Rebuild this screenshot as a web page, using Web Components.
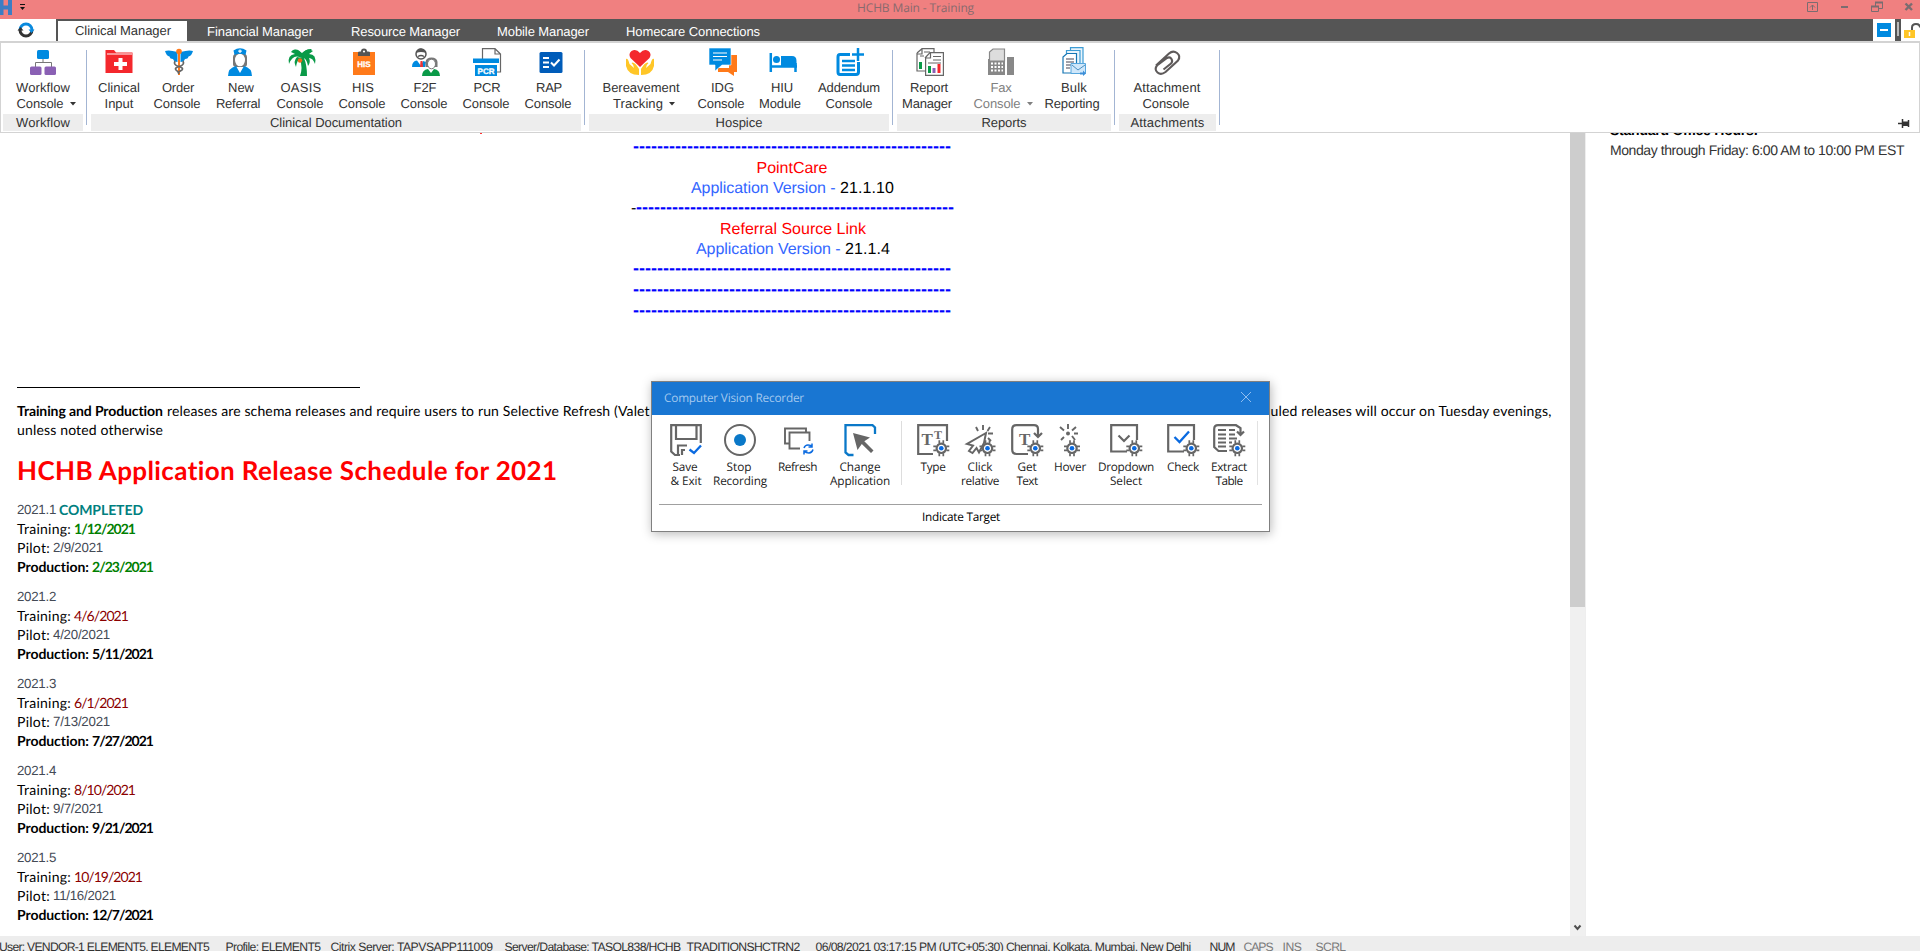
<!DOCTYPE html>
<html lang="en"><head><meta charset="utf-8"><title>HCHB Main - Training</title>
<style>
html,body{margin:0;height:100%;overflow:hidden;background:#fff}
body{font:13px "Liberation Sans",sans-serif;color:#333;text-rendering:geometricPrecision}
</style></head><body>
<app-shell></app-shell>
<script>
const define=(name,html,setup)=>customElements.define(name,class extends HTMLElement{
  connectedCallback(){
    if(this.shadowRoot)return;
    const root=this.attachShadow({mode:'open'});
    root.innerHTML=typeof html==='function'?html(this):html;
    if(setup)setup(this,root);
  }
});

// Single-line text whose tracking is adjusted to occupy a given width.
define('fit-text','<style>:host{display:inline-block;white-space:pre;text-align:left}span{display:inline-block}</style><span><slot></slot></span>',(el,root)=>{
  const w=+el.getAttribute('w'),s=root.querySelector('span');
  if(!w)return;
  el.style.width=w+'px';
  const n=el.textContent.length;
  s.style.letterSpacing=((w-s.getBoundingClientRect().width)/n).toFixed(3)+'px';
});
const ft=(t,w,cls='')=>`<fit-text w="${w}" class="${cls}">${t.replace(/&/g,'&amp;')}</fit-text>`;

/* ---------- icons ---------- */
const gear=(x,y)=>`<g transform="translate(${x} ${y})"><circle r="4.7" fill="#fff" stroke="#666" stroke-width="2.2"/><path d="M-2-5V-8M2-5V-8M-2 5V8M2 5V8M-5-2H-8M-5 2H-8M5-2H8M5 2H8" stroke="#666" stroke-width="1.7"/><circle r="2.3" fill="#0a6ae0"/></g>`;
const I={
workflow:'<rect x="8" y="2" width="12" height="9" rx="1.5" fill="#008ae0"/><path d="M14 11V15M6.500 19V14.500H22.500V19" fill="none" stroke="#777" stroke-width="1"/><rect x="1" y="18.500" width="11.500" height="8.500" rx="1.500" fill="#8a60b4"/><rect x="15.500" y="18.500" width="11.500" height="8.500" rx="1.500" fill="#8a60b4"/>',
clinical:'<path d="M.5 2H9L11 4.500H27.500V25H.5z" fill="#f4282d"/><path d="M2 6H27" stroke="#fff" stroke-width="1"/><path d="M13.500 10H17.500V14H22V18H17.500V22H13.500V18H9V14H13.500z" fill="#fff"/>',
order:'<path d="M0 3Q4 1.500 12.500 4V14Q9 14 8 11Q5 11 4.500 8.500Q1.500 8 0 3zM28 3Q24 1.500 15.500 4V14Q19 14 20 11Q23 11 23.500 8.500Q26.500 8 28 3z" fill="#008ae0"/><path d="M14 4V27" stroke="#ff7a1a" stroke-width="2"/><circle cx="14" cy="3.500" r="2.800" fill="#ff7a1a"/><path d="M10 13Q8 17 14 18.500Q19 20 17 22Q15 23 14 24M18 13Q20 17 14 18.500Q9 20 11 22Q13 23 14 26" fill="none" stroke="#666" stroke-width="1.700"/>',
referral:'<path d="M7 16V9Q7 5 14 5T21 9V16Q21 19 18 19H10Q7 19 7 16z" fill="#777"/><ellipse cx="14" cy="12" rx="5" ry="6.300" fill="#fff"/><path d="M8.500 7L7.500 2.500Q14-2 20.500 2.500L19.500 7Q14 4.500 8.500 7z" fill="#008ae0"/><path d="M14 1.500V5M12.200 3.200H15.800" stroke="#fff" stroke-width="1.200"/><path d="M2 28Q2 20 10 18L14 25 18 18Q26 20 26 28z" fill="#008ae0"/>',
oasis:'<path d="M14 10Q5 5 1 16Q-1 7 7 6L3 4Q6-1 14 5Q20-1 25 3L21 6Q29 6 27 16Q25 10 21 10Q23 14 20 18Q19 12 16 10Q19 17 19 28H12Q15 20 12 11Q9 12 8 19Q5 13 9 9z" fill="#0a9a48"/><path d="M5 2Q11 0 14 7Q17 0 24 1L15 9z" fill="#0a9a48"/><circle cx="12" cy="12.500" r="2.200" fill="#f06a18"/>',
his:'<path d="M3 4H25V27H3z" fill="#ff7a1a"/><path d="M8 8V4.500Q8 3.500 10 3.500H11Q11 .5 14 .5T17 3.500H18Q20 3.500 20 4.500V8z" fill="#555"/><circle cx="14" cy="3.500" r="1.100" fill="#fff"/><text x="14" y="19" text-anchor="middle" font-family="Liberation Sans" font-weight="bold" font-size="8" stroke="#fff" stroke-width=".3" fill="#fff">HIS</text>',
f2f:'<circle cx="9" cy="6" r="5" fill="#fff" stroke="#555" stroke-width="1.500"/><path d="M4 5Q5 0 9 .5T14 5Q9 3 4 5z" fill="#555"/><path d="M6 8.500Q9 6.500 12 8.500" stroke="#555" stroke-width="1.500" fill="none"/><path d="M0 19Q0 13 5 12.500L9 18 11 13 14 14 13 19z" fill="#008ae0"/><path d="M8.500 13H10.500L11 19H8z" fill="#e33"/><path d="M13.500 19V14Q14 9.500 19.500 9.500T25.500 14V19z" fill="#777"/><ellipse cx="19.500" cy="16" rx="4" ry="4.800" fill="#fff" stroke="#777"/><path d="M10 28Q10 22 16 21L19 25 22 21Q28 22 28 28z" fill="#0a9a48"/>',
pcr:'<path d="M9.500 12V.7H22L27.500 6V24H23M22 .7V6H27.500" fill="#fff" stroke="#666" stroke-width="1.200"/><path d="M0 10.500H26V15H0zM2 17H24V28H2z" fill="#008ae0"/><text x="13" y="25.500" text-anchor="middle" font-family="Liberation Sans" font-weight="bold" font-size="8" stroke="#fff" stroke-width=".3" fill="#fff">PCR</text>',
rap:'<rect x="2.500" y="4" width="23" height="21" rx="1.500" fill="#005cb9"/><path d="M6 10H12M6 14.500H12M6 19H12" stroke="#fff" stroke-width="2"/><path d="M14 14.500L17 17.500 22.500 11.500" fill="none" stroke="#fff" stroke-width="2"/>',
heart:'<path d="M14 19L4.500 10Q2 6 5.500 3Q10 0 14 5Q18 0 22.500 3Q26 6 23.500 10z" fill="#f4282d"/><path d="M0 11Q2 10 3.500 16L8 20Q8 17 5.500 15Q8 13 13 21V27Q2 27 0 18zM28 11Q26 10 24.500 16L20 20Q20 17 22.500 15Q20 13 15 21V27Q26 27 28 18z" fill="#ffc627"/>',
idg:'<path d="M20 7H28V24H25V28L19 24H9V20H20z" fill="#ff7a1a"/><path d="M0 0H22V17H13L6 23V17H0z" fill="#008ae0" stroke="#fff" stroke-width=".6"/><path d="M4 5H18M4 8.500H18M4 12H13" stroke="#fff" stroke-width="1"/>',
hiu:'<path d="M1.800 5V24M1 18.500H28M26.500 24V15" stroke="#008ae0" stroke-width="2.500"/><circle cx="7.500" cy="11.500" r="3.500" fill="#008ae0"/><path d="M12 8H23Q27.500 8 27.500 13V18H12z" fill="#008ae0"/>',
addendum:'<path d="M14 6.500H4Q2 6.500 2 9V24Q2 26.500 4 26.500H20Q22.500 26.500 22.500 24V14" fill="none" stroke="#008ae0" stroke-width="3"/><path d="M22 0V13M16 6.500H28M6 13H19M6 17.500H19M6 22H19" stroke="#008ae0" stroke-width="2.500"/>',
report:'<path d="M1 5V23H9M1 5L6 .7H18V4M6 1V6H1" fill="#fff" stroke="#666" stroke-width="1.200"/><path d="M9 10L14 4.600H27.400V27.400H9.600V10H14.500V5" fill="#fff" stroke="#666" stroke-width="1.200"/><path d="M8 4H14M4 8H8M17 8.500H25M17 12H25M12 15H25" stroke="#666" stroke-width="1.200"/><path d="M3 14H6V21H3zM12 18H15V25H12z" fill="#0a9a48"/><path d="M16.500 20H19.500V25H16.500z" fill="#8a60b4"/><path d="M21.500 16H24.500V25H21.500z" fill="#f4282d"/>',
fax:'<path d="M1 11H18V27H1zM20 9H27V27H20z" fill="#888"/><path d="M2.500 13V4L6 1H17.500V13z" fill="#ddd" stroke="#888" stroke-width="1.200"/><path d="M4 15.500H16M4 19H16M4 22.500H16" stroke="#fff" stroke-width="2" stroke-dasharray="2 1.500"/>',
bulk:'<path d="M10.500 3V-.4H23V17M6.500 6V2.500H20V19" fill="#e8f4fc" stroke="#3d9cd4" stroke-width="1.200"/><path d="M3 9L7 5.500H16.500V25H3z" fill="#fff" stroke="#1676b4" stroke-width="1.200"/><path d="M6 11H14M6 14H14M6 17H11M6 20H10" stroke="#445" stroke-width="1.200"/><path d="M11 15.500H25.500V25.500H11z" fill="#cfe7fa" stroke="#56a6dd"/><path d="M12 17L18 22 25 17" fill="none" stroke="#4a8fc0"/><path d="M20 24.500H23V22.500L26 25.500 23 28V26.500H20z" fill="#3d8fd8"/>',
clip:'<path d="M3 17L16 5Q20 1.500 24 4.500T25 12L12.500 23.500Q8 27 4.500 24T4 17L14 9.500Q17 8 18.500 10.500T18 15L10.500 21" transform="translate(0 .5)" fill="none" stroke="#5e5a5a" stroke-width="2.100"/>',
save:'<path d="M10 31H5L1.200 27.500V1.200H30.800V19M6 1V15H26.500V1M8 31V21.500H17M12 31V26H15" fill="none" stroke="#666" stroke-width="2.200"/><path d="M19.500 25.500L24 29 31 21.500" fill="none" stroke="#0a6ae0" stroke-width="2.300"/>',
stop:'<circle cx="16" cy="16" r="15" fill="#fff" stroke="#666" stroke-width="2"/><circle cx="16" cy="16" r="6" fill="#0a78c8"/>',
refresh:'<path d="M7 19.500H3V4.500H24V8M18 24.500H7.500V8.500H27.500V17" fill="none" stroke="#666" stroke-width="1.900"/><path d="M22 24Q23 21 26 21T30 22.500M30 19.500V23H26.500M31 25.500Q30 29 27 29T22.500 27.500M22 30.500V27H25.500" fill="none" stroke="#0a6ae0" stroke-width="1.500"/>',
change:'<path d="M9.500 31H4.500L1.500 28.500V1.200H28.500L31 3.500V10" fill="none" stroke="#0a78c8" stroke-width="2.300"/><path d="M9 9L26 13.500 20.300 17.300 29.500 26.500 27 29 17.800 20 13.500 26z" fill="#666"/>',
type:'<path d="M16 30H1.200V1.200H30V17" fill="none" stroke="#666" stroke-width="2.200"/><text x="4.500" y="21" font-family="Liberation Serif" font-weight="bold" font-size="17" fill="#666">T</text><text x="17" y="15" font-family="Liberation Serif" font-weight="bold" font-size="12" fill="#666">T</text>'+gear(24.300,24.300),
click:'<path d="M21 9L2 20 8 21.500 4 27 7.500 29 11.500 24 14 28.500 19 19z" fill="none" stroke="#666" stroke-width="2"/><path d="M18 1V6M11 3L13 7M25 3L22.500 7M23 9.500H28M23 14L26 17" stroke="#666" stroke-width="1.900"/>'+gear(22.500,24.300),
get:'<path d="M17 30H5.500Q1.200 30 1.200 25.500V5.500Q1.200 1.200 5.500 1.200H23Q27 1.200 27 5V12M23 9L27 13 31 9" fill="none" stroke="#666" stroke-width="2.200"/><text x="8" y="20.500" font-family="Liberation Serif" font-weight="bold" font-size="17" fill="#666">T</text>'+gear(24.300,24.300),
hover:'<circle cx="14" cy="9.500" r="2" fill="#666"/><path d="M14 0V5M6 3L10 6.500M22 3L18 6.500M20 9.500H24M7 16L10 13M18 12L21 16" stroke="#666" stroke-width="1.900"/>'+gear(18,24.300),
dropdown:'<path d="M17 27.500H1.200V1.200H27V16" fill="none" stroke="#666" stroke-width="2.200"/><path d="M8.500 11.500L14 17 19.500 11.500" fill="none" stroke="#666" stroke-width="2.200"/>'+gear(24.300,24.300),
check:'<path d="M17 27.500H1.200V1.200H27V16" fill="none" stroke="#666" stroke-width="2.200"/><path d="M7.500 13L12.500 18 22 7.500" fill="none" stroke="#0a6ae0" stroke-width="2.300"/>'+gear(24.300,24.300),
extract:'<path d="M14 27H5.500L1.200 23V5Q1.200 1.200 5 1.200H23L27.500 4V10M24 7.500L27.500 11 31 7.500" fill="none" stroke="#666" stroke-width="2.200"/><path d="M5 6H13M5 10.500H13M5 14.500H13M5 18.500H13M5 22.500H13M16 6H22M16 10.500H22M16 14.500H24M16 18.500H19" stroke="#666" stroke-width="1.800"/>'+gear(24.300,24.300)
};
define('ui-icon',el=>{const s=+el.getAttribute('size');return `<style>:host{display:block;width:${s}px;height:${s}px}svg{display:block;overflow:visible}</style><svg width="${s}" height="${s}" viewBox="0 0 ${s} ${s}">${I[el.getAttribute('name')]}</svg>`});

/* ---------- window chrome ---------- */
define('title-bar',`<style>:host{display:grid;grid-template-columns:60px 1fr 120px;height:19px;background:#f08080;color:#886a6e}
fit-text{font:12px/19px "Open Sans",sans-serif;height:19px;margin-left:797px;margin-top:-2px}svg{display:block}</style>
<svg width="60" height="19"><path d="M0 0H3.500V5.500H8V0H12V15H8V9.500H3.500V15H0z" fill="#3c7dc4"/><path d="M20 4.500H25" stroke="#111"/><path d="M20 7H25L22.500 10z" fill="#111"/></svg>
${ft('HCHB Main - Training',117)}
<svg width="120" height="19"><g fill="none" stroke="#7b6c70"><path d="M7.500 2.500H17.500V11.500H7.500zM12.500 10V5M10 7.500L12.500 5 15 7.500M71.500 6.500H78.500V11.500H71.500zM75.500 6V2.500H82.500V8.500H79"/><path d="M41 7H48M71 6.500H79M75 2.500H83" stroke-width="2"/><path d="M105.500 3.500L112 10M112 3.500L105.500 10" stroke-width="2.400"/></g></svg>`);
define('tab-item',el=>`<style>:host{display:block;height:19px;line-height:19px;margin-top:3px;color:#fff;white-space:nowrap;font-size:13px}:host([active]){background:#fff;color:#333}</style><slot></slot>`);
define('tab-bar',`<style>:host{display:flex;height:22px;background:#555}.menu{width:56px;height:22px;background:#fff}.menu svg{display:block}
.t1{width:112px;padding-left:17px;margin-left:2px;margin-top:2px!important;height:20px}.g1{margin-left:20px}.g2{margin-left:38px}.g3{margin-left:37px}.g4{margin-left:37px}.tools{margin-left:auto}</style>
<div class="menu"><svg width="56" height="22"><path d="M20 11A6 6 0 0 1 32 11" fill="none" stroke="#0a8ade" stroke-width="3"/><path d="M32 11A6 6 0 0 1 20 11" fill="none" stroke="#333" stroke-width="3"/><path d="M28.500 10.500H34.500L31.500 14z" fill="#0a8ade"/><path d="M17.500 11.500H23.500L20.500 8z" fill="#333"/></svg></div>
<tab-item active class="t1">${ft('Clinical Manager',96)}</tab-item><tab-item class="g1">${ft('Financial Manager',106)}</tab-item><tab-item class="g2">${ft('Resource Manager',109)}</tab-item><tab-item class="g3">${ft('Mobile Manager',92)}</tab-item><tab-item class="g4">${ft('Homecare Connections',134)}</tab-item>
<svg class="tools" width="47" height="22"><path d="M0 0H22V22H0zM28 0H47V22H28z" fill="#fff"/><rect x="4" y="4" width="14" height="14" fill="#008ae0"/><path d="M7 11H15" stroke="#fff" stroke-width="2"/><path d="M25 3V17" stroke="#ddd" stroke-width="1.500"/><path d="M39 11V8.500Q39 5 43 5T47 8.500" fill="none" stroke="#555" stroke-width="2"/><rect x="31" y="11" width="11" height="8" fill="#ffc627"/><path d="M36.500 13V17" stroke="#fff" stroke-width="1.500"/></svg>`);

/* ---------- ribbon ---------- */
// [icon, icon centre, line 1, width, centre, line 2, width, centre, menu arrow, disabled]
const groups=[
 {x:3,w:80,label:'Workflow',lw:54,items:[['workflow',43,'Workflow',54,43,'Console',47,40,1]]},
 {x:91,w:490,label:'Clinical Documentation',lw:132,items:[['clinical',119,'Clinical',42,119,'Input',29,119],['order',179,'Order',32,178,'Console',47,177],['referral',240,'New',26,241,'Referral',44,238],['oasis',302,'OASIS',41,301,'Console',47,300],['his',364,'HIS',22,363,'Console',47,362],['f2f',426,'F2F',23,425,'Console',47,424],['pcr',487,'PCR',27,487,'Console',47,486],['rap',550.500,'RAP',26,549,'Console',47,548]]},
 {x:589,w:300,label:'Hospice',lw:47,items:[['heart',640,'Bereavement',77,641,'Tracking',50,638,1],['idg',723,'IDG',23,722.500,'Console',47,721],['hiu',782.500,'HIU',22,782,'Module',42,780],['addendum',850,'Addendum',62,849,'Console',47,849]]},
 {x:897,w:214,label:'Reports',lw:45,items:[['report',930,'Report',38,929,'Manager',50,927],['fax',1001,'Fax',21,1001,'Console',47,997,1,1],['bulk',1074,'Bulk',26,1074,'Reporting',55,1072]]},
 {x:1119,w:97,label:'Attachments',lw:74,items:[['clip',1167,'Attachment',67,1167,'Console',47,1166]]}];
define('ribbon-button',el=>{
  const d=JSON.parse(el.getAttribute('data')),c=d[1];
  const row=(t,w,cx,a)=>`<div class="row"><span style="margin-left:${40+cx-c-w/2}px">${ft(t,w)}</span>${a?'<svg width="6" height="4"><path d="M0 0H6L3 3.500z" fill="currentColor"/></svg>':''}</div>`;
  return `<style>:host{display:block;width:80px;flex:none;color:${d[9]?'#808080':'#333'}}ui-icon{margin:5px 0 4px 26px}.row{height:16px;line-height:16px;white-space:nowrap;display:flex;align-items:center}.row svg{margin-left:6px}</style><ui-icon name="${d[0]}" size="28"></ui-icon>${row(d[2],d[3],d[4])}${row(d[5],d[6],d[7],d[8])}`});
define('ribbon-group',el=>{
  const g=groups[el.getAttribute('index')];let cur=g.x;
  const items=g.items.map(d=>{const m=d[1]-40-cur;cur=d[1]+40;return `<ribbon-button style="margin-left:${m}px" data='${JSON.stringify(d)}'></ribbon-button>`}).join('');
  return `<style>:host{display:block;width:${g.w}px;flex:none;padding-right:4px;background:linear-gradient(#a3b5d3,#a3b5d3) right 7px/1px 75px no-repeat}.items{height:71px;display:flex}.label{height:17px;line-height:17px;background:#ededed;text-align:center}</style><div class="items">${items}</div><div class="label">${ft(g.label,g.lw)}</div>`});
define('ribbon-bar',`<style>:host{display:flex;box-sizing:border-box;height:92px;border:1px solid #d3d3d3;border-top-width:2px;background:#fff;gap:4px;padding-left:2px}.pin{align-self:flex-end;margin:0 9px 4px auto}</style>
${groups.map((g,i)=>`<ribbon-group index="${i}"></ribbon-group>`).join('')}<svg class="pin" width="12" height="9"><path d="M0 4.500H4M4.500 0V9M10.500 1V8" stroke="#333" stroke-width="1.500"/><path d="M4 2.500H10V7H4z" fill="#333"/></svg>`);

/* ---------- document ---------- */
const dash='-'.repeat(53);
define('version-notes',`<style>:host{display:block;font-size:16px;padding-left:631px;color:#000}div{height:20px;line-height:20px;white-space:nowrap}.d{height:21px;line-height:21px;font-size:18px;font-weight:bold;color:#00f;padding-left:2px}.r{color:#f00;margin-top:2px}.u{margin-bottom:-2px}.b{color:#36f}.k{font-size:16px;font-weight:normal;color:#000}</style>
<div class="d">${ft(dash,318)}</div><div style="padding-left:125.500px" class="r">${ft('PointCare',71)}</div><div class="u" style="padding-left:60px">${ft('Application Version - ',149,'b')}${ft('21.1.10',54)}</div>
<div class="d" style="padding-left:0">${ft('-',5,'k')}${ft(dash,318)}</div><div style="padding-left:89px" class="r">${ft('Referral Source Link',146)}</div><div class="u" style="padding-left:65px">${ft('Application Version - ',149,'b')}${ft('21.1.4',45)}</div>
<div class="d">${ft(dash,318)}</div><div class="d">${ft(dash,318)}</div><div class="d">${ft(dash,318)}</div>`);
define('release-entry',el=>{
  const d=el.getAttribute('data').split('|');// name, training, w, pilot, w, production
  const done=d[6];
  return `<style>:host{display:block;margin-bottom:11px;font:14px/19px Lato,sans-serif;color:#000}div{height:19px;white-space:nowrap;display:flex}.n{font:13.300px/19px "Liberation Sans",sans-serif;color:#444a55}.t{color:${done?'#008000':'#8b0000'};${done?'font-weight:bold':''}}.p{font-weight:bold}.g{color:${done?'#008000':'#000'}}.c{font-weight:bold;color:#008080}fit-text{margin-right:3px}</style>
  <div>${ft(d[0],39,'n')}${done?ft('COMPLETED',84,'c'):''}</div><div>${ft('Training:',54)}${ft(d[1],d[2],'t')}</div><div>${ft('Pilot:',33)}${ft(d[3],d[4],'n')}</div><div class="p">${ft('Production:',72)}${ft(d[5],61,'g')}</div>`});
define('release-doc',`<style>:host{display:block;overflow:hidden;background:#fff}.scrap{width:2px;height:1px;background:#f33;margin-left:480px}version-notes{margin-top:2px}
.rule{width:343px;height:1px;background:#000;margin:66px 0 13px 17px}.body{padding-left:17px;color:#000;font:14px/19px Lato,sans-serif;white-space:nowrap}p{margin:0;height:19px;display:flex}b{font-weight:bold}.gap{width:620.500px;flex:none}h1{margin:16px 0 15px;height:30px;font:bold 26px/30px Lato,sans-serif;color:#f00}.s{margin-left:4px}</style>
<div class="scrap"></div><version-notes></version-notes><div class="rule"></div><div class="body"><p><b>${ft('Training and Production',146)}</b>${ft('releases are schema releases and require users to run Selective Refresh (Valet',483,'s')}<span class="gap"></span>${ft('uled releases will occur on Tuesday evenings,',281)}</p><p>${ft('unless noted otherwise',146)}</p>
<h1>${ft('HCHB Application Release Schedule for 2021',541)}</h1>
<release-entry data="2021.1|1/12/2021|61|2/9/2021|50|2/23/2021|1"></release-entry><release-entry data="2021.2|4/6/2021|54|4/20/2021|57|5/11/2021"></release-entry><release-entry data="2021.3|6/1/2021|54|7/13/2021|57|7/27/2021"></release-entry><release-entry data="2021.4|8/10/2021|61|9/7/2021|50|9/21/2021"></release-entry><release-entry data="2021.5|10/19/2021|68|11/16/2021|63|12/7/2021"></release-entry></div>`);
define('scroll-track',`<style>:host{display:flex;flex-direction:column;justify-content:space-between;background:#f0f0f0;border-right:1px solid #eee}i{height:474px;background:#cdcdcd}svg{display:block;margin-bottom:4px}</style><i></i><svg width="15" height="9"><path d="M4.500 2.500L7.500 6 10.500 2.500" fill="none" stroke="#505050" stroke-width="2"/></svg>`);
define('side-panel',`<style>:host{display:block;overflow:hidden;padding-left:24px;font-size:14px}div{height:20px;line-height:20px;white-space:nowrap}.h{margin-top:-13px;font-weight:bold;color:#000}</style><div class="h">${ft('Standard Office Hours:',148)}</div><div>${ft('Monday through Friday: 6:00 AM to 10:00 PM EST',294)}</div>`);
define('status-bar',`<style>:host{display:flex;height:15px;overflow:hidden;background:#ededed;font-size:12.200px;line-height:23px;color:#333;white-space:nowrap}.o{color:#7a7a7a}fit-text{flex:none}</style>
${[['User: VENDOR-1 ELEMENT5, ELEMENT5',210,-1],['Profile: ELEMENT5',95,16.5],['Citrix Server: TAPVSAPP111009',162,10],['Server/Database: TASQL838/HCHB_TRADITIONSHCTRN2',295,12],['06/08/2021 03:17:15 PM (UTC+05:30) Chennai, Kolkata, Mumbai, New Delhi',375,16],['NUM',25,19],['CAPS',29,9,'o'],['INS',19,10,'o'],['SCRL',30,14,'o']].map(a=>`<span class="${a[3]||''}" style="margin-left:${a[2]}px">${ft(a[0],a[1])}</span>`).join('')}`);

/* ---------- recorder dialog ---------- */
const tools=[['save',686,'Save',25,685,'& Exit',31,686],['stop',740,'Stop',25,739,'Recording',54,740],['refresh',798,'Refresh',39,797.500],['change',860,'Change',41,860,'Application',60,860],['type',933,'Type',25,933],['click',981,'Click',25,980,'relative',38,980],['get',1027,'Get',19,1027,'Text',21,1027],['hover',1070,'Hover',32,1070],['dropdown',1126,'Dropdown',56,1126,'Select',32,1126],['check',1183,'Check',32,1183],['extract',1229,'Extract',36,1229,'Table',27,1229]];
define('tool-button',el=>{const d=JSON.parse(el.getAttribute('data'));const row=(t,w,c)=>`<div><span style="margin-left:${30+c-d[1]-w/2}px">${ft(t,w)}</span></div>`;
 return `<style>:host{display:block;width:60px;flex:none}ui-icon{margin:0 0 4px 14px}div{height:14px;line-height:14px;display:flex;white-space:nowrap}</style><ui-icon name="${d[0]}" size="32"></ui-icon>${row(d[2],d[3],d[4])}${d[5]?row(d[5],d[6],d[7]):''}`});
define('vision-recorder',()=>{let cur=652;
 return `<style>:host{display:block;position:absolute;left:651px;top:381px;width:617px;height:149px;border:1px solid #808080;background:#fff;box-shadow:1px 2px 10px rgba(0,0,0,.28);font:11.800px "Open Sans",sans-serif;color:#222}
 header{height:33px;background:#1976d2;color:#a4c9ef;display:flex;justify-content:space-between;line-height:32px}header fit-text{margin-left:12px}header svg{margin:9px 17px 0 0}
 .tools{display:flex;height:80px;padding-top:9px;background:linear-gradient(#ddd,#ddd) 249px 6px/1px 64px no-repeat,linear-gradient(#e2e2e2,#e2e2e2) 605px 6px/1px 64px no-repeat}
 footer{margin:0 7px;border-top:1px solid #a0a0a0;height:25px;line-height:25px;padding-left:263px;color:#000}</style>
 <header>${ft('Computer Vision Recorder',140)}<svg width="12" height="12"><path d="M1 1L11 11M11 1L1 11" stroke="#8fbdf0" stroke-width="1"/></svg></header>
 <div class="tools">${tools.map(d=>{const m=d[1]-30-cur;cur=d[1]+30;return `<tool-button style="margin-left:${m}px" data='${JSON.stringify(d)}'></tool-button>`}).join('')}</div>
 <footer>${ft('Indicate Target',78)}</footer>`});

define('app-shell',`<style>:host{display:flex;flex-direction:column;width:1920px;height:951px;overflow:hidden;position:relative}main{flex:1;min-height:0;display:grid;grid-template-columns:1570px 16px 1fr}</style>
<title-bar></title-bar><tab-bar></tab-bar><ribbon-bar></ribbon-bar><main><release-doc></release-doc><scroll-track></scroll-track><side-panel></side-panel></main><status-bar></status-bar><vision-recorder></vision-recorder>`);
</script></body></html>
